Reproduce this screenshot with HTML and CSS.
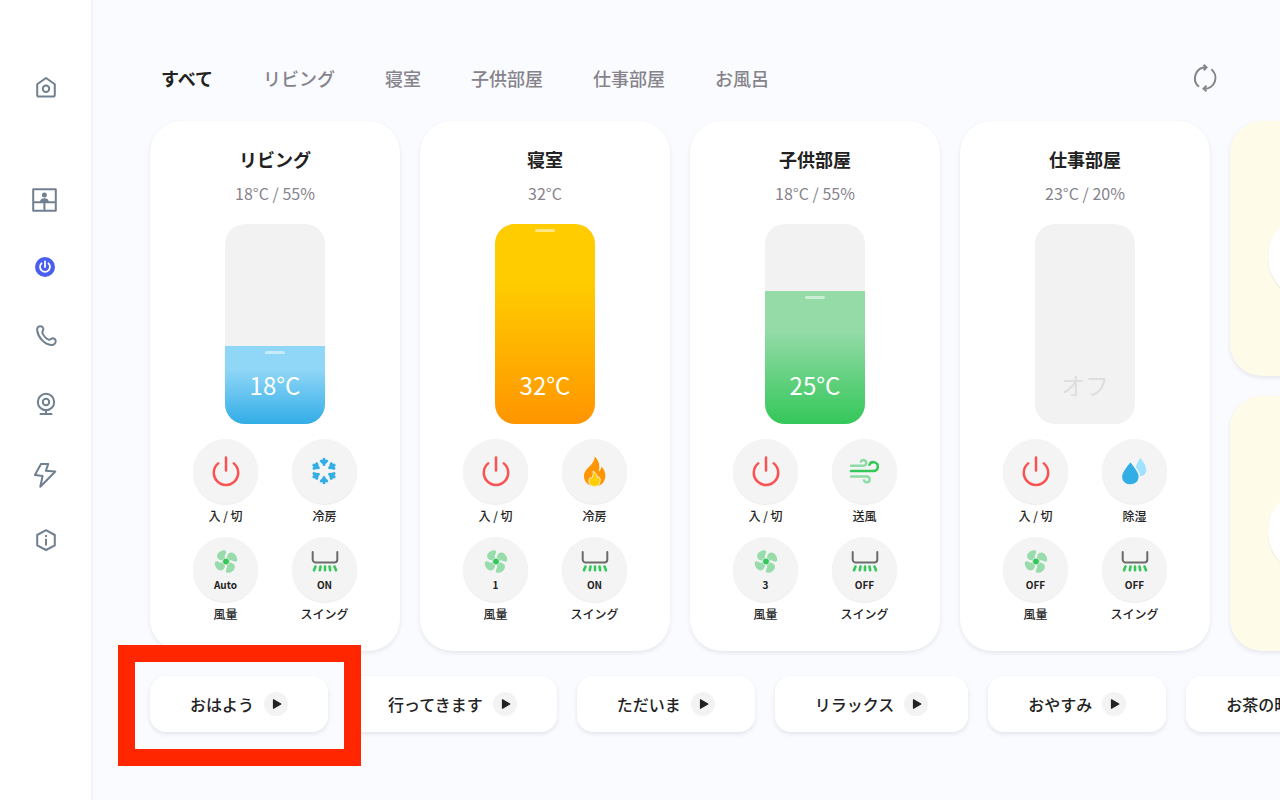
FILE: index.html
```html
<!DOCTYPE html>
<html lang="ja">
<head>
<meta charset="utf-8">
<meta name="viewport" content="width=device-width, initial-scale=1">
<title>エアコン</title>
<link rel="stylesheet" href="styles.css">
</head>
<body>
<svg class="sprite" aria-hidden="true">
  <symbol id="power" viewBox="0 0 32 32"><g fill="none" stroke="#fa5252" stroke-width="2.5" stroke-linecap="round"><path d="M8.2 8.4A12.2 12.2 0 1 0 23.8 8.4"/><path d="M16 2.6V15.6"/></g></symbol>
  <symbol id="cool" viewBox="-15 -16 32 32"><g fill="none" stroke="#32ade6" stroke-width="3" stroke-linecap="round" stroke-linejoin="round"><path id="flake" d="M0-6.500V-11.700M-2.700-10L0-7.500L2.700-10"/><use href="#flake" transform="rotate(60)"/><use href="#flake" transform="rotate(120)"/><use href="#flake" transform="rotate(180)"/><use href="#flake" transform="rotate(240)"/><use href="#flake" transform="rotate(300)"/></g></symbol>
  <symbol id="flame" viewBox="0 0 32 32"><path fill="#ff9500" d="M15.600 1.500C20 5.500 21.300 10.500 19.800 16.800c1.500-1.100 2.400-2.900 2.600-5.200 3 2.600 4.200 6.400 3.800 10.400-.5 5.300-4.300 9.300-10.200 9.300S5.500 27.300 5 22c-.4-4 1.500-6.600 4.100-9.300C12.900 9.300 15.700 6.200 15.600 1.500z"/><path fill="#ffcc00" stroke="#f4f4f4" stroke-width=".9" d="M14 16c3 1.800 4.500 4.300 4.300 7.100l1.300-1.500c1.400 1.300 1.800 3 1.500 4.800-.4 3.200-2.500 5-5.600 5s-5.400-1.800-5.600-5c-.1-1.700.5-2.900 1.400-4l.9 1.100c1.800-1.900 2.500-4.300 1.800-7.500z"/></symbol>
  <symbol id="wind" viewBox="0 0 32 32"><g fill="none" stroke-width="2.500" stroke-linecap="round"><g stroke="#8edca5"><path d="M2 10.700H14.300a2.800 2.800 0 1 0-2.400-4"/><path d="M2 21.500H17.700a2.900 2.900 0 1 1-2.700 3.900"/></g><path stroke="#34c759" d="M2 16H24.300a4.400 4.400 0 1 0-3.900-6.200"/></g></symbol>
  <symbol id="drops" viewBox="0 0 32 32"><path fill="#a0e2ff" d="M21.500 2.700c3.300 4.700 5.800 8.800 5.800 12.400 0 3.700-2.400 6-5.800 6s-5.200-2.300-5.200-6c0-3.600 2-7.700 5.200-12.400z"/><path fill="#32ade6" stroke="#f4f4f4" stroke-width="1.600" d="M11.400 6c5.100 6.500 9.100 10.800 9.100 15.600 0 5-4 8.500-9.100 8.500s-9.200-3.500-9.200-8.500c0-4.800 4.100-9.100 9.200-15.600z"/></symbol>
  <symbol id="fan" viewBox="-13 -13 26 26"><g fill="#98dcac"><path id="blade" d="M-1-1.700C-4 .2-9.400-1.800-9.300-5.600-9-9.800-3.600-12.400-.7-11.500 1-10.500-.2-8-1.100-6.400-1.800-4.800-.4-3.500-1-1.700z"/><use href="#blade" transform="rotate(90)"/><use href="#blade" transform="rotate(180)"/><use href="#blade" transform="rotate(270)"/></g><circle r="3.600" fill="#34c759" stroke="#f4f4f4" stroke-width=".8"/></symbol>
  <symbol id="swing" viewBox="0 -2 28 25"><path d="M1.700 1V8.500a3 3 0 0 0 3 3H23.300a3 3 0 0 0 3-3V1" fill="none" stroke="#6b6b6b" stroke-width="2" stroke-linecap="round"/><path d="M4.500 15.500L3 19.300M9.500 15.500L8.800 19.300M14 15.500V19.300M18.500 15.500l.7 3.800M23.500 15.500L25 19.300" fill="none" stroke="#34c759" stroke-width="2.600" stroke-linecap="round"/></symbol>
  <symbol id="play" viewBox="0 0 24 24"><circle cx="12" cy="12" r="12" fill="#f3f3f3"/><path d="M9.500 7.800V16.200L16.800 12z" fill="#222" stroke="#222" stroke-width="1.200" stroke-linejoin="round"/></symbol>
</svg>
<div class="app">
  <nav class="sidebar" aria-label="メニュー">
    <a class="nav-link nav-home" href="#home" aria-label="ホーム"><svg viewBox="0 0 40 40"><path d="M12.200 16.200L21 10l8.800 6.200V26.700a1.900 1.900 0 0 1-1.900 1.900H14.100a1.900 1.900 0 0 1-1.900-1.900z"/><circle cx="21" cy="20.700" r="3.200"/></svg></a>
    <a class="nav-link" href="#window" aria-label="訪問者"><svg viewBox="0 0 40 40"><path d="M8.200 9.200H30.800V30.800H8.200zM8.200 22.300H30.800M19.400 22.300V30.800"/><circle class="solid" cx="19.400" cy="15" r="2.500"/><path class="solid" d="M15 22.500c0-3 1.500-4.200 4.400-4.200s4.400 1.200 4.400 4.200z"/></svg></a>
    <a class="nav-link" href="#climate" aria-label="エアコン" aria-current="page"><svg viewBox="0 0 40 40"><circle cx="20" cy="19" r="10" fill="#4a5ff0" stroke="none"/><path d="M16.500 15.300a5 5 0 1 0 7 0M20 13.500V19" stroke="#fff" stroke-width="1.800"/></svg></a>
    <a class="nav-link" href="#phone" aria-label="電話"><svg viewBox="0 0 40 40"><path d="M12.200 14.500c-.5-2.600 1-4.200 2.800-4.300 2.200-.1 3.500 1.600 3.300 3.400-.2 1.500-1.400 1.700-.9 3.200 1 3 3.300 5.500 6.300 6.900 1.500.5 1.900-.8 3.200-1.200 2-.6 3.700.7 3.800 2.600.1 2.500-1.900 4-4.500 3.900C19.500 28.500 13.200 21.500 12.200 14.500z"/></svg></a>
    <a class="nav-link" href="#camera" aria-label="カメラ"><svg viewBox="0 0 40 40"><circle cx="21" cy="18" r="8.200"/><circle cx="21" cy="18" r="3.200"/><path d="M21 26.200V30M15.500 30H26.500"/></svg></a>
    <a class="nav-link" href="#energy" aria-label="電力"><svg viewBox="0 0 40 40"><path d="M16 11.900H23.300L20.800 18.800 30.300 19.500 15.300 34.800 17.600 24 9.900 23z"/></svg></a>
    <a class="nav-link" href="#info" aria-label="情報"><svg viewBox="0 0 40 40"><path d="M21 10.200L29.800 15V25.300L21 30 12.200 25.300V15zM21 19.500V24.700M21 15.800V16.200"/></svg></a>
  </nav>
  <main class="main">
    <header class="topbar">
      <div class="tabs" role="tablist">
        <button class="tab active" role="tab" aria-selected="true">すべて</button>
        <button class="tab" role="tab">リビング</button>
        <button class="tab" role="tab">寝室</button>
        <button class="tab" role="tab">子供部屋</button>
        <button class="tab" role="tab">仕事部屋</button>
        <button class="tab" role="tab">お風呂</button>
      </div>
      <button class="refresh" aria-label="更新"><svg viewBox="0 0 32 32"><path d="M10 24.700A11 11 0 0 1 16.800 5.200M14.500 2.800L17.500 5.300 14.900 8.400M22.300 7.200A11 11 0 0 1 15.200 26.800M17.500 23.600L14.500 26.700 17.500 29.200"/></svg></button>
    </header>

    <div class="cards">
      <section class="card">
        <h2>リビング</h2>
        <p class="reading">18°C / 55%</p>
        <label class="gauge"><span class="fill blue" style="height:39%"></span><span class="value">18°C</span><input type="range" min="16" max="32" value="18" aria-label="リビング 設定温度"></label>
        <div class="controls">
          <button class="control"><span class="round"><svg class="icon"><use href="#power"/></svg></span>入 / 切</button>
          <button class="control"><span class="round"><svg class="icon"><use href="#cool"/></svg></span>冷房</button>
          <button class="control"><span class="round stacked"><svg class="small"><use href="#fan"/></svg><b>Auto</b></span>風量</button>
          <button class="control"><span class="round stacked"><svg class="small"><use href="#swing"/></svg><b>ON</b></span>スイング</button>
        </div>
      </section>
      <section class="card">
        <h2>寝室</h2>
        <p class="reading">32°C</p>
        <label class="gauge"><span class="fill orange" style="height:100%"></span><span class="value">32°C</span><input type="range" min="16" max="32" value="32" aria-label="寝室 設定温度"></label>
        <div class="controls">
          <button class="control"><span class="round"><svg class="icon"><use href="#power"/></svg></span>入 / 切</button>
          <button class="control"><span class="round"><svg class="icon"><use href="#flame"/></svg></span>冷房</button>
          <button class="control"><span class="round stacked"><svg class="small"><use href="#fan"/></svg><b>1</b></span>風量</button>
          <button class="control"><span class="round stacked"><svg class="small"><use href="#swing"/></svg><b>ON</b></span>スイング</button>
        </div>
      </section>
      <section class="card">
        <h2>子供部屋</h2>
        <p class="reading">18°C / 55%</p>
        <label class="gauge"><span class="fill green" style="height:66.5%"></span><span class="value">25°C</span><input type="range" min="16" max="32" value="25" aria-label="子供部屋 設定温度"></label>
        <div class="controls">
          <button class="control"><span class="round"><svg class="icon"><use href="#power"/></svg></span>入 / 切</button>
          <button class="control"><span class="round"><svg class="icon"><use href="#wind"/></svg></span>送風</button>
          <button class="control"><span class="round stacked"><svg class="small"><use href="#fan"/></svg><b>3</b></span>風量</button>
          <button class="control"><span class="round stacked"><svg class="small"><use href="#swing"/></svg><b>OFF</b></span>スイング</button>
        </div>
      </section>
      <section class="card">
        <h2>仕事部屋</h2>
        <p class="reading">23°C / 20%</p>
        <label class="gauge off"><span class="value">オフ</span><input type="range" min="16" max="32" disabled aria-label="仕事部屋 設定温度"></label>
        <div class="controls">
          <button class="control"><span class="round"><svg class="icon"><use href="#power"/></svg></span>入 / 切</button>
          <button class="control"><span class="round"><svg class="icon"><use href="#drops"/></svg></span>除湿</button>
          <button class="control"><span class="round stacked"><svg class="small"><use href="#fan"/></svg><b>OFF</b></span>風量</button>
          <button class="control"><span class="round stacked"><svg class="small"><use href="#swing"/></svg><b>OFF</b></span>スイング</button>
        </div>
      </section>
      <div class="side-stack">
        <section class="light-card"><span class="dial"></span></section>
        <section class="light-card"><span class="dial"></span></section>
      </div>
    </div>

    <div class="scenes">
      <button class="scene marked">おはよう<svg><use href="#play"/></svg></button>
      <button class="scene">行ってきます<svg><use href="#play"/></svg></button>
      <button class="scene">ただいま<svg><use href="#play"/></svg></button>
      <button class="scene">リラックス<svg><use href="#play"/></svg></button>
      <button class="scene">おやすみ<svg><use href="#play"/></svg></button>
      <button class="scene">お茶の時間<svg><use href="#play"/></svg></button>
    </div>
  </main>
</div>
</body>
</html>
```
FILE: styles.css
```css
* { box-sizing: border-box; }

body {
  margin: 0;
  background: #fafbff;
  color: #222;
  font-family: "Noto Sans CJK JP", sans-serif;
}

button {
  border: 0;
  padding: 0;
  background: none;
  color: inherit;
  font: inherit;
  cursor: pointer;
}

svg { display: block; }

.sprite {
  position: absolute;
  width: 0;
  height: 0;
}

.app {
  display: flex;
  min-height: 100vh;
}

.sidebar {
  flex: none;
  width: 91px;
  padding: 68px 1px 0 0;
  display: flex;
  flex-direction: column;
  align-items: center;
  gap: 28px;
  background: #fff;
  box-shadow: 0 0 3px rgba(30, 40, 90, 0.14);
}

.nav-link {
  width: 40px;
  height: 40px;
}

.nav-home { margin-bottom: 44px; }

.nav-link svg {
  width: 40px;
  height: 40px;
  fill: none;
  stroke: #708090;
  stroke-width: 2;
  stroke-linecap: round;
  stroke-linejoin: round;
}

.nav-link .solid {
  fill: #708090;
  stroke: none;
}

.main {
  flex: 1;
  min-width: 0;
  padding: 62px 0 60px 59px;
  overflow: hidden;
}

.topbar {
  display: flex;
  justify-content: space-between;
  align-items: center;
  height: 32px;
  padding: 0 59px 0 11px;
}

.tabs {
  display: flex;
  gap: 50px;
}

.tab {
  color: #86838c;
  font-size: 18px;
  font-weight: 500;
  line-height: 32px;
  white-space: nowrap;
}

.tab.active {
  color: #222;
  font-weight: 700;
}

.refresh svg {
  width: 32px;
  height: 32px;
  fill: none;
  stroke: #86838c;
  stroke-width: 2;
}

.cards {
  display: flex;
  gap: 20px;
  margin-top: 27px;
}

.card,
.light-card {
  flex: none;
  width: 250px;
  border-radius: 32px;
  background: #fff;
  box-shadow: 0 2px 4px rgba(30, 30, 60, 0.09);
}

.card {
  display: flex;
  flex-direction: column;
  align-items: center;
  padding: 23px 0 27px;
}

h2 {
  margin: 0;
  font-size: 18px;
  font-weight: 700;
  line-height: 30px;
}

.reading {
  margin: 6px 0 18px;
  color: #86838c;
  font-size: 16px;
  line-height: 26px;
}

.gauge {
  position: relative;
  display: flex;
  flex-direction: column;
  justify-content: flex-end;
  width: 100px;
  height: 200px;
  border-radius: 20px;
  background: #f2f2f2;
  overflow: hidden;
}

.fill::before {
  content: "";
  display: block;
  width: 20px;
  height: 3px;
  margin: 5px auto 0;
  border-radius: 2px;
  background: rgba(255, 255, 255, 0.5);
}

.fill {
  display: block;
  overflow: hidden;
}

.blue { background: linear-gradient(#90d6f7 30%, #32ade6); }
.orange { background: linear-gradient(#ffcc00 30%, #ff9500); }
.green { background: linear-gradient(#94dba8 30%, #34c759); }

.value {
  position: absolute;
  inset: auto 0 21px;
  color: #fff;
  font-size: 24px;
  line-height: 36px;
  text-align: center;
}

.off .value { color: #dedede; }

.gauge input {
  position: absolute;
  inset: 0;
  width: 100%;
  height: 100%;
  margin: 0;
  opacity: 0;
  writing-mode: vertical-lr;
  direction: rtl;
}

.controls {
  display: grid;
  grid-template-columns: 65px 65px;
  gap: 11px 34px;
  margin-top: 15px;
}

.control {
  display: flex;
  flex-direction: column;
  align-items: center;
  gap: 2px;
  font-size: 12px;
  font-weight: 500;
  line-height: 20px;
  white-space: nowrap;
}

.round {
  display: flex;
  flex-direction: column;
  align-items: center;
  justify-content: center;
  width: 65px;
  height: 65px;
  padding-bottom: 1px;
  border-radius: 50%;
  background: #f4f4f4;
  box-shadow: 0 1px 1px rgba(0, 0, 0, 0.08);
}

.stacked { padding: 6px 0 0; }

.icon {
  width: 32px;
  height: 32px;
}

.small {
  width: 28px;
  height: 25px;
}

.round b {
  font-size: 10px;
  line-height: 22px;
}

.side-stack {
  display: grid;
  grid-template-rows: 1fr 1fr;
  gap: 20px;
}

.light-card {
  padding: 92px 38px 0;
  background: #fffbe9;
}

.dial {
  display: block;
  width: 88px;
  height: 88px;
  border-radius: 50%;
  background: #fff;
  box-shadow: 0 1px 1px rgba(0, 0, 0, 0.1);
}

.scenes {
  display: flex;
  gap: 20px;
  margin-top: 25px;
}

.scene {
  position: relative;
  flex: none;
  display: flex;
  align-items: center;
  gap: 10px;
  height: 56px;
  padding: 0 40px;
  border-radius: 16px;
  background: #fff;
  box-shadow: 0 2px 4px rgba(30, 30, 60, 0.1);
  font-size: 16px;
  font-weight: 500;
  white-space: nowrap;
}

.scene svg {
  width: 24px;
  height: 24px;
}

.marked { z-index: 1; }

.marked::after {
  content: "";
  position: absolute;
  inset: -31px -33px -34px -32px;
  border: 17px solid #ff2600;
  pointer-events: none;
}
```
